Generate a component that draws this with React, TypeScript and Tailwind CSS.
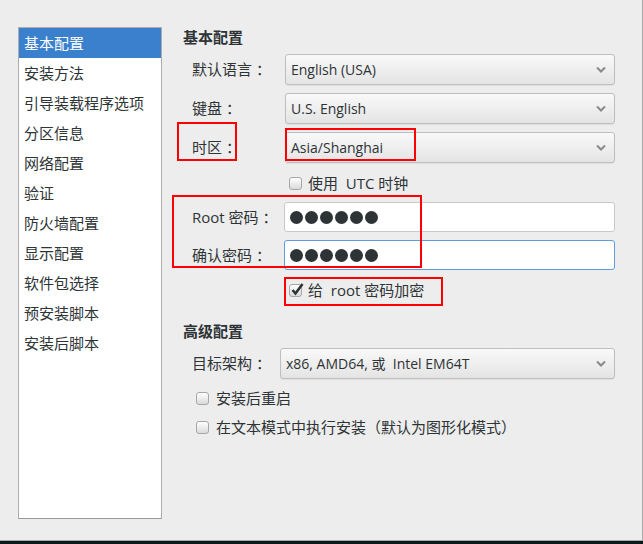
import React from 'react';

const NAV_ITEMS = [
  '基本配置',
  '安装方法',
  '引导装载程序选项',
  '分区信息',
  '网络配置',
  '验证',
  '防火墙配置',
  '显示配置',
  '软件包选择',
  '预安装脚本',
  '安装后脚本',
];

function Chevron() {
  return (
    <svg width="10" height="7" viewBox="0 0 10 7" className="shrink-0">
      <path d="M1 1.5 L5 5.5 L9 1.5" fill="none" stroke="#8a8a8a" strokeWidth="2" />
    </svg>
  );
}

function Select({ value }: { value: string }) {
  return (
    <div className="flex-1 h-[31px] flex items-center justify-between rounded-[3px] border border-[#bebebe] bg-linear-to-b from-[#f9f9f9] to-[#e4e4e4] pl-[5px] pr-[8px] text-[14px] text-[#2e3436] shadow-[0_1px_1px_rgba(0,0,0,0.06)]">
      <span className="whitespace-pre">{value}</span>
      <Chevron />
    </div>
  );
}

function Checkbox({ checked }: { checked?: boolean }) {
  return (
    <span className="relative inline-block w-[13px] h-[13px] shrink-0 rounded-[3px] border border-[#a7a7a7] bg-linear-to-b from-white to-[#dadada]">
      {checked && (
        <svg width="15" height="14" viewBox="0 0 15 14" className="absolute left-[0px] top-[-3px] overflow-visible">
          <path d="M2.5 8 L5.5 11.5 L12.5 2" fill="none" stroke="#2e3436" strokeWidth="2.6" />
        </svg>
      )}
    </span>
  );
}

function PasswordDots() {
  return (
    <div className="flex gap-[2px]">
      {[...Array(6)].map((_, i) => (
        <span key={i} className="w-[13px] h-[13px] rounded-full bg-[#2e3436]" />
      ))}
    </div>
  );
}

export default function App() {
  return (
    <div className="w-[643px] h-[544px] overflow-hidden bg-[#0b1719] font-['Open_Sans','Noto_Sans_CJK_SC',sans-serif] text-[#2e3436]">
      <div className="relative h-[541px] bg-[#ededed] border-r border-b border-[#a9a9a9] flex pt-[27px] pl-[18px]">
        {/* Sidebar */}
        <aside className="w-[144px] h-[492px] shrink-0 bg-white border border-[#adadad] border-b-[#9a9a9a]">
          {NAV_ITEMS.map((item, i) => (
            <div
              key={item}
              className={
                i === 0
                  ? 'h-[30px] flex items-center pl-[5px] text-[15px] bg-[#3b80cc] text-white'
                  : 'h-[30px] flex items-center pl-[5px] text-[15px] text-[#2e3436]'
              }
            >
              {item}
            </div>
          ))}
        </aside>

        {/* Form */}
        <main className="flex-1 flex flex-col pl-[21px] pr-[27px]">
          <h2 className="h-[20px] leading-[20px] text-[15px] font-bold">基本配置</h2>

          <div className="mt-[7px] flex items-center">
            <span className="w-[102px] pl-[9px] text-[15px]">默认语言 ：</span>
            <Select value="English (USA)" />
          </div>
          <div className="mt-[8px] flex items-center">
            <span className="w-[102px] pl-[9px] text-[15px]">键盘 ：</span>
            <Select value="U.S. English" />
          </div>
          <div className="mt-[8px] flex items-center">
            <span className="w-[102px] pl-[9px] text-[15px]">时区 ：</span>
            <Select value="Asia/Shanghai" />
          </div>

          <label className="mt-[10px] h-[20px] flex items-center gap-[6px] pl-[106px] text-[15px]">
            <Checkbox />
            <span className="whitespace-pre">使用  UTC 时钟</span>
          </label>

          <div className="mt-[9px] flex items-center">
            <span className="w-[101px] pl-[9px] text-[15px]">Root 密码 ：</span>
            <div className="flex-1 h-[30px] flex items-center rounded-[3px] border border-[#c9c9c9] bg-white pl-[5px]">
              <PasswordDots />
            </div>
          </div>
          <div className="mt-[8px] flex items-center">
            <span className="w-[101px] pl-[9px] text-[15px]">确认密码 ：</span>
            <div className="flex-1 h-[30px] flex items-center rounded-[3px] border border-[#5e9ce0] bg-white pl-[5px]">
              <PasswordDots />
            </div>
          </div>

          <label className="mt-[10px] h-[20px] flex items-center gap-[6px] pl-[106px] text-[15px]">
            <Checkbox checked />
            <span className="whitespace-pre">给  root 密码加密</span>
          </label>

          <h2 className="mt-[21px] h-[20px] leading-[20px] text-[15px] font-bold">高级配置</h2>

          <div className="mt-[7px] flex items-center">
            <span className="w-[97px] pl-[9px] text-[15px]">目标架构 ：</span>
            <Select value="x86, AMD64, 或  Intel EM64T" />
          </div>

          <label className="mt-[9px] h-[20px] flex items-center gap-[7px] pl-[13px] text-[15px]">
            <Checkbox />
            <span>安装后重启</span>
          </label>
          <label className="mt-[9px] h-[20px] flex items-center gap-[7px] pl-[13px] text-[15px]">
            <Checkbox />
            <span>在文本模式中执行安装（默认为图形化模式）</span>
          </label>
        </main>

        {/* Red annotation boxes */}
        <div className="absolute left-[177px] top-[122px] w-[60px] h-[39px] border-2 border-[#ff0000] pointer-events-none" />
        <div className="absolute left-[285px] top-[128px] w-[131px] h-[33px] border-2 border-[#ff0000] pointer-events-none" />
        <div className="absolute left-[172px] top-[195px] w-[250px] h-[73px] border-2 border-[#ff0000] pointer-events-none" />
        <div className="absolute left-[284px] top-[277px] w-[159px] h-[29px] border-2 border-[#ff0000] pointer-events-none" />
      </div>
    </div>
  );
}
